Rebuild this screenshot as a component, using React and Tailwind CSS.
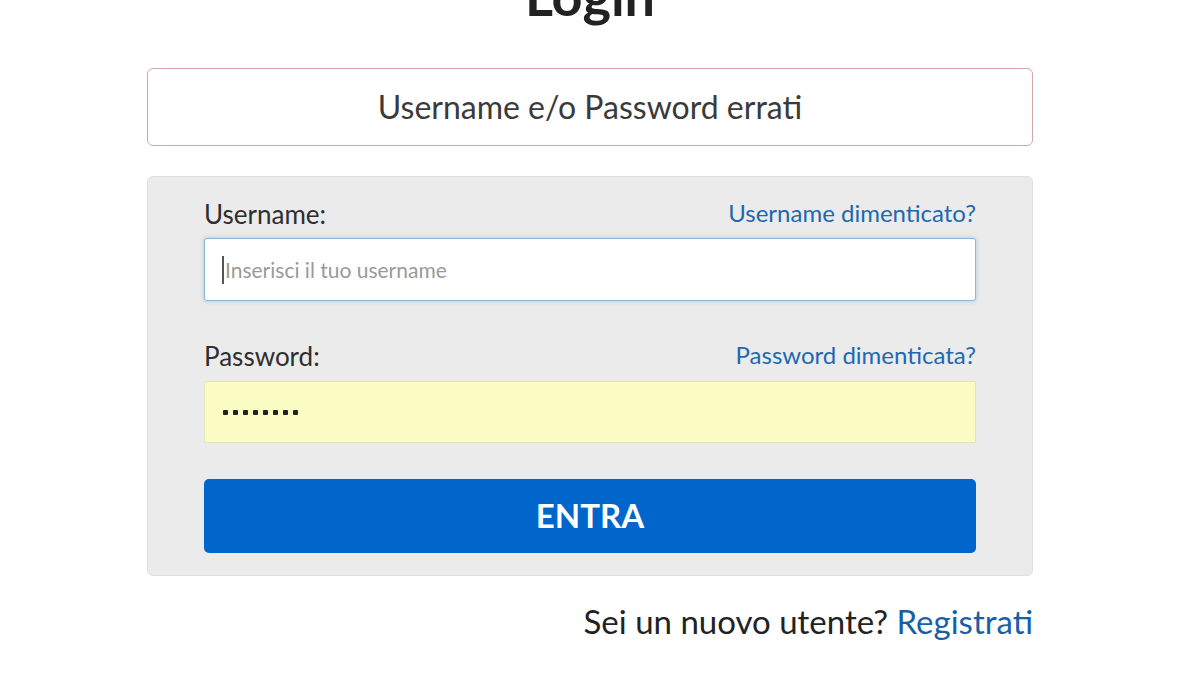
export default function App() {
  const font = { fontFamily: "Lato, 'Noto Sans', sans-serif" };
  return (
    <div className="min-h-[675px] w-[1200px] overflow-hidden bg-white text-[#333]" style={font}>
      <div className="ml-[147px] w-[886px]">
        <h1 className="-mt-[36px] h-[104px] text-center text-[54px] font-bold leading-[64px] text-[#222]">Login</h1>

        <div className="flex h-[78px] items-center justify-center rounded-[6px] border border-[#cfa7ad] bg-white text-[32px] text-[#3a3a3a]">
          Username e/o Password errati
        </div>

        <div className="mt-[30px] rounded-[6px] border border-[#dedede] bg-[#ebebeb] px-[56px] pt-[20px] pb-[22px]">
          <div className="flex h-[34px] items-end justify-between">
            <label className="text-[26px] leading-[34px] text-[#2e2e2e]">Username:</label>
            <a className="pb-[2px] text-[24px] leading-[32px] text-[#1d69b0]">Username dimenticato?</a>
          </div>
          <div className="mt-[7px] flex h-[63px] items-center rounded-[3px] border border-[#8fb5d6] bg-white px-[17px] shadow-[0_0_4px_rgba(102,160,210,0.5)]">
            <span className="mr-[1px] h-[28px] w-[2px] bg-[#555]"></span>
            <span className="text-[21px] text-[#9a9a9a]">Inserisci il tuo username</span>
          </div>

          <div className="mt-[38px] flex h-[34px] items-end justify-between">
            <label className="text-[26px] leading-[34px] text-[#2e2e2e]">Password:</label>
            <a className="pb-[2px] text-[24px] leading-[32px] text-[#1d69b0]">Password dimenticata?</a>
          </div>
          <div className="mt-[8px] flex h-[62px] items-center gap-[5px] rounded-[2px] border border-[#e3e4b8] bg-[#fafcc4] px-[18px]">
            {[0, 1, 2, 3, 4, 5, 6, 7].map((i) => (
              <span key={i} className="h-[5px] w-[5px] rounded-[1px] bg-[#222]"></span>
            ))}
          </div>

          <button className="mt-[36px] h-[74px] w-full rounded-[5px] bg-[#0066cc] text-[33px] font-bold text-white">
            ENTRA
          </button>
        </div>

        <div className="mt-[25px] text-right text-[33px] leading-[40px] text-[#222]">
          Sei un nuovo utente? <a className="text-[#1a5fa6]">Registrati</a>
        </div>
      </div>
    </div>
  );
}
